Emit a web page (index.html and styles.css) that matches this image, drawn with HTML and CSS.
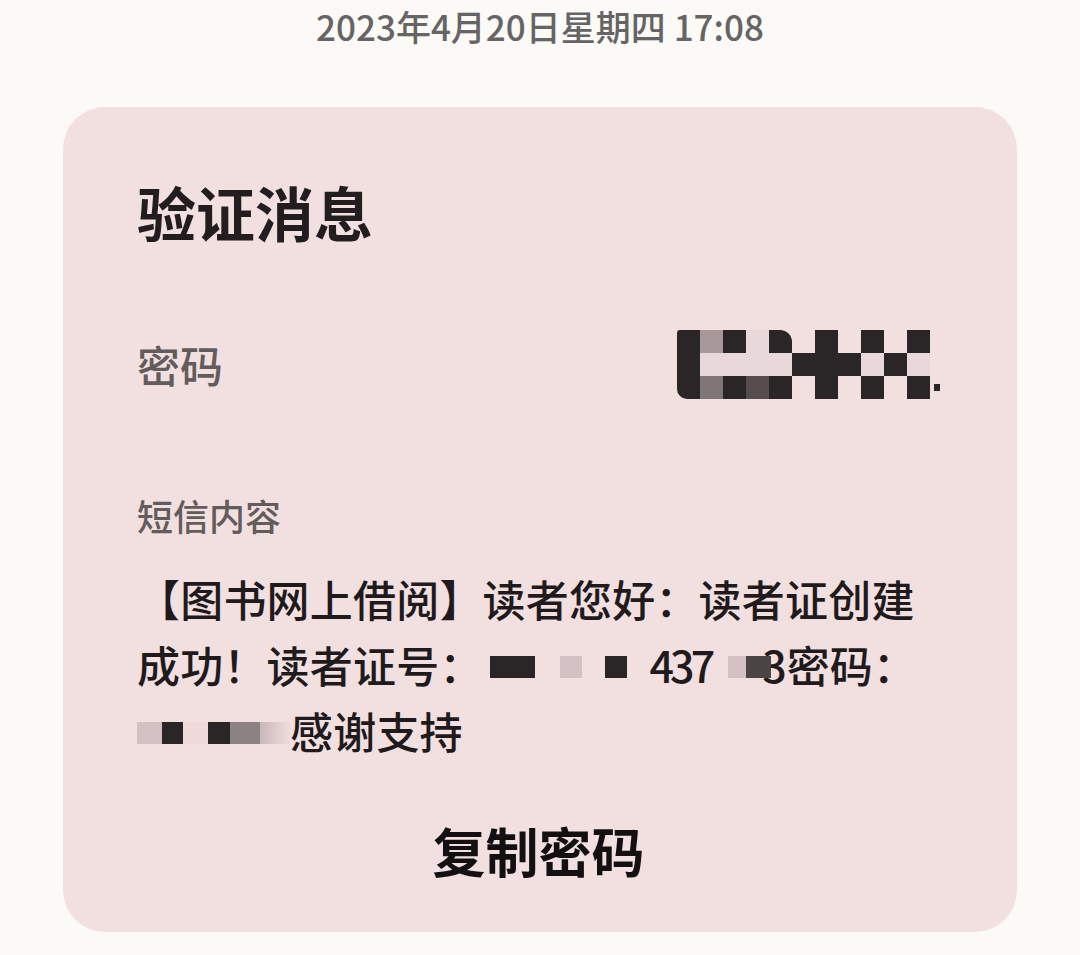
FILE: index.html
```html
<!DOCTYPE html>
<html lang="zh-CN">
<head>
<meta charset="utf-8">
<link rel="stylesheet" href="styles.css">
</head>
<body>
<div class="date">2023年4月20日星期四 17:08</div>
<div class="card">
  <div class="title">验证消息</div>
  <div class="pw-row">
    <div class="label-lg">密码</div>
    <div class="mosaic-wrap">
      <div class="mosaic">
        <i class="k rtl"></i><i class="g"></i><i class="k"></i><i class="l"></i><i class="k hook"></i><i class="p"></i><i class="k"></i><i class="p"></i><i class="k"></i><i class="p"></i><i class="k"></i>
        <i class="k"></i><i class="l"></i><i class="l"></i><i class="l"></i><i class="l"></i><i class="k"></i><i class="k"></i><i class="k"></i><i class="l"></i><i class="k"></i><i class="l"></i>
        <i class="k rbl"></i><i class="m"></i><i class="k"></i><i class="d"></i><i class="k"></i><i class="p"></i><i class="k"></i><i class="p"></i><i class="k"></i><i class="p"></i><i class="k"></i>
      </div>
      <div class="dot"></div>
    </div>
  </div>
  <div class="label-sm">短信内容</div>
  <div class="sms">
    <div class="line">【图书网上借阅】读者您好：读者证创建</div>
    <div class="line">成功！读者证号：<span class="b b-k w45 ml7"></span><span class="b b-l w22 ml25"></span><span class="b b-k w22 ml23"></span><span class="num ml23">437</span><span class="b b-l w18 ml17"></span><span class="b b-d w25 over"></span><span class="three">3</span>密码：</div>
    <div class="line"><span class="b b-l w25"></span><span class="b b-k w21"></span><span class="b b-p w25"></span><span class="b b-k w22"></span><span class="b b-m w30"></span><span class="b b-f w30"></span>感谢支持</div>
  </div>
  <div class="action">复制密码</div>
</div>
</body>
</html>
```
FILE: styles.css
```css
* { box-sizing: border-box; }
html, body {
  margin: 0;
  padding: 0;
}
body {
  width: 1080px;
  height: 955px;
  overflow: hidden;
  background: #fbfaf6;
  font-family: "Noto Sans CJK SC", "Noto Sans", sans-serif;
}
.date {
  height: 48px;
  line-height: 52px;
  text-align: center;
  font-size: 35px;
  font-weight: 500;
  color: #666464;
}
.card {
  margin: 59px 0 0 63px;
  width: 954px;
  height: 825px;
  border-radius: 42px;
  background: #f2dfe0;
  padding: 65px 77px 0 74px;
}
.title {
  font-size: 59px;
  line-height: 80px;
  font-weight: 700;
  color: #221e1f;
}
.pw-row {
  margin-top: 77px;
  height: 70px;
  display: flex;
  justify-content: space-between;
  align-items: center;
}
.label-lg {
  font-size: 43px;
  font-weight: 500;
  color: #625c5d;
  line-height: 70px;
}
.mosaic-wrap {
  display: flex;
  align-items: flex-end;
  gap: 4px;
}
.mosaic {
  display: grid;
  grid-template-columns: repeat(11, 23px);
  grid-template-rows: repeat(3, 23px);
}
.mosaic i { display: block; }
.k { background: #2a2526; }
.g { background: #a89899; }
.l { background: #e9d8d9; }
.p { background: #f2dfe0; }
.m { background: #7f7677; }
.d { background: #554d4e; }
.rtl { border-top-left-radius: 3px; }
.rbl { border-bottom-left-radius: 10px; }
.hook { border-top-right-radius: 12px; }
.dot {
  width: 6px;
  height: 7px;
  background: #2a2526;
  margin-bottom: 8px;
}
.label-sm {
  margin-top: 91px;
  font-size: 36px;
  font-weight: 500;
  line-height: 50px;
  color: #625c5d;
}
.sms {
  margin-top: 25px;
  font-size: 43px;
  font-weight: 500;
  line-height: 66px;
  color: #1f1b1c;
  letter-spacing: 0.2px;
}
.line {
  white-space: nowrap;
  display: flex;
  align-items: center;
  height: 66px;
}
.b {
  display: inline-block;
  height: 22px;
  margin-top: 6px;
}
.b-k { background: #2a2526; }
.b-l { background: #d2c0c2; }
.b-p { background: #eedadb; }
.b-m { background: #8a8283; }
.b-d { background: #4a4445; }
.b-f { background: linear-gradient(90deg, #c9b8b9, #efdcdd); }
.over {
  position: relative;
  z-index: 1;
}
.three {
  margin-left: -9px;
  letter-spacing: 0;
}
.num { letter-spacing: -4px; }
.w18 { width: 18px; }
.w21 { width: 21px; }
.w22 { width: 22px; }
.w25 { width: 25px; }
.w30 { width: 30px; }
.w45 { width: 45px; }
.ml7 { margin-left: 7px; }
.ml17 { margin-left: 17px; }
.ml23 { margin-left: 23px; }
.ml25 { margin-left: 25px; }
.action {
  margin-top: 52px;
  font-size: 53px;
  line-height: 70px;
  font-weight: 700;
  color: #121010;
  text-align: center;
}
```
